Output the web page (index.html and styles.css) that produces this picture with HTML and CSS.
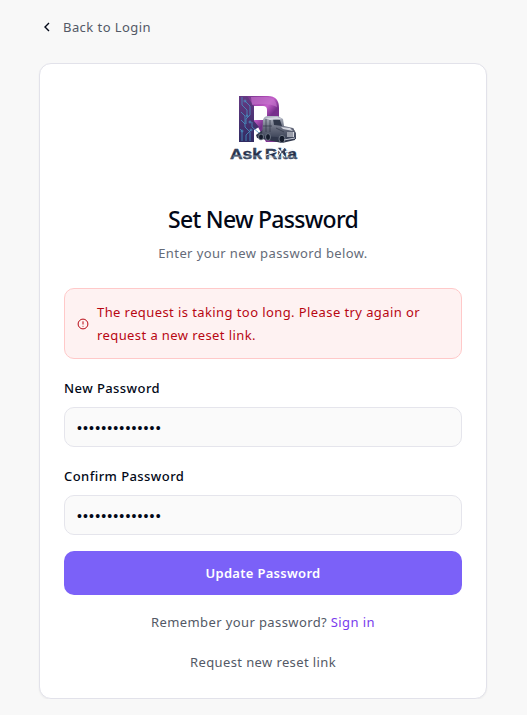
FILE: index.html
```html
<!DOCTYPE html>
<html lang="en">
<head>
<meta charset="utf-8">
<meta name="viewport" content="width=device-width, initial-scale=1">
<title>Set New Password</title>
<link rel="stylesheet" href="styles.css">
</head>
<body>
<main class="page">
  <a class="back"><svg class="back-icon" viewBox="0 0 16 16"><path d="M10 4 6 8l4 4"/></svg><span>Back to Login</span></a>
  <section class="card">
    <svg class="logo" viewBox="-1 0 80 80" role="img" aria-label="Ask Rita">
      <defs>
        <linearGradient id="purple" x1="0" y1="0" x2="1" y2="1">
          <stop offset="0" stop-color="#563177"/><stop offset=".3" stop-color="#a445ad"/><stop offset=".45" stop-color="#c45fca"/><stop offset=".6" stop-color="#762f8b"/><stop offset="1" stop-color="#8b3a9b"/>
        </linearGradient>
        <linearGradient id="board" x1="0" y1="0" x2="0" y2="1">
          <stop offset="0" stop-color="#663a84"/><stop offset="1" stop-color="#302b62"/>
        </linearGradient>
        <linearGradient id="chrome" x1="0" y1="0" x2="0" y2="1">
          <stop offset="0" stop-color="#b5bac7"/><stop offset=".5" stop-color="#656a7b"/><stop offset="1" stop-color="#30384d"/>
        </linearGradient>
        <linearGradient id="word" x1="0" y1="0" x2="0" y2="1">
          <stop offset="0" stop-color="#52627b"/><stop offset=".5" stop-color="#202842"/><stop offset="1" stop-color="#75869b"/>
        </linearGradient>
      </defs>
      <path fill="url(#purple)" fill-rule="evenodd" d="M15 8h29q11 0 11 12v9l-5 8 6 17H42l-8-15h-4v15H15zM30 18v14h9q4 0 4-4v-6q0-4-4-4z"/>
      <path fill="url(#board)" d="M15 8h8l7 10v15l5 6-5 3v12H15z"/>
      <path fill="#c574cd" opacity=".65" d="M27 9h16q9 0 10 10-9-5-25-2z"/>
      <g fill="none" stroke="#4794c3" stroke-width=".8">
        <path d="M18 9v8l5 5v6M21 13l5 5v9l-4 4v5M17 24l4 4v11l5 5v9M17 32l4 4M18 53V43l-2-2M22 53v-6l5-5M28 34v5l7 6"/>
        <circle cx="21" cy="13" r="1"/><circle cx="23" cy="28" r="1"/><circle cx="27" cy="42" r="1"/><circle cx="18" cy="43" r="1"/><circle cx="26" cy="34" r="1"/>
      </g>
      <path fill="#30374b" d="m32 47 8-6 29-1 2 4v8l-13 3-25-5z"/>
      <path fill="url(#chrome)" d="M39 32q1-4 5-4h10l5 3 1 7 9 2 3 5v6l-10 2-9-4-15-1z"/>
      <path fill="#303749" d="m49 31 7 1 2 6-8-1z"/>
      <path fill="#d5d7e0" d="m41 30 12-1 5 2-12 1zM57 39l9 1 3 3-10-2zM63 44h7v5h-7z"/>
      <path fill="none" stroke="#303748" stroke-width=".7" d="M42 31v13M46 32v12M39 38h9M64 44v5M66 44v5M68 44v5M52 40l8 4"/>
      <g fill="#151c2c" stroke="#8b93a2" stroke-width=".7"><ellipse cx="37" cy="49" rx="2.5" ry="3"/><ellipse cx="44" cy="49" rx="2.5" ry="3.4"/><ellipse cx="58" cy="51" rx="3" ry="3.7"/></g>
      <path stroke="#c1c6d3" stroke-width="1" d="m60 52 11-2"/>
      <g class="wordmark"><text x="6" y="71" textLength="32" lengthAdjust="spacingAndGlyphs">Ask</text><text x="41" y="71" textLength="32" lengthAdjust="spacingAndGlyphs">Rita</text></g>
      <path fill="none" stroke="#f1f5fa" stroke-width="1.3" d="m53 60 8 9M60 59l-7 11M42 67l12-4M61 64l8-2"/>
      <path fill="none" stroke="#303b54" stroke-width=".8" d="m55 60 7 9M61 60l-6 8"/>
      <path fill="none" stroke="#a6b8ca" stroke-width=".6" d="M9 68h28M43 69h28"/>
    </svg>
    <h1>Set New Password</h1>
    <p class="subtitle">Enter your new password below.</p>
    <div class="alert" role="alert">
      <svg class="alert-icon" viewBox="0 0 12 12"><circle cx="6" cy="6" r="4.9"/><path d="M6 3.3v3.2M6 7.9v.8"/></svg>
      <p>The request is taking too long. Please try again or<br>request a new reset link.</p>
    </div>
    <form>
      <label for="new">New Password</label>
      <input id="new" type="password" value="password123456">
      <label for="confirm">Confirm Password</label>
      <input id="confirm" type="password" value="password123456">
      <button type="button">Update Password</button>
    </form>
    <p class="signin">Remember your password? <a>Sign in</a></p>
    <p class="request">Request new reset link</p>
  </section>
</main>
</body>
</html>
```
FILE: styles.css
```css
* { box-sizing: border-box; }
body { margin: 0; background: #f8f8f8; color: #020817; font: 13px/20px "Noto Sans", sans-serif; letter-spacing: .39px; }
h1, p { margin: 0; }
.page { width: 448px; margin: 0 0 0 39px; padding-top: 17px; }
.back { display: flex; align-items: center; gap: 8px; height: 20px; color: #535966; letter-spacing: .44px; }
.back-icon { width: 16px; height: 16px; fill: none; stroke: #020817; stroke-width: 1.4; }
.card { display: flex; flex-direction: column; height: 636px; margin-top: 26px; padding: 24px; background: #fff; border: 1px solid #e2e2ea; border-radius: 12px; box-shadow: 0 1px 2px #0000000d; }
.logo { display: block; width: 80px; height: 80px; margin: 0 auto; }
.wordmark { fill: url(#word); stroke: #26334f; stroke-width: .4; font: bold 14px "Liberation Sans", sans-serif; letter-spacing: 0; }
h1 { margin-top: 35px; text-align: center; font-size: 23px; line-height: 32px; font-weight: 500; letter-spacing: -.72px; white-space: nowrap; }
.subtitle { margin-top: 8px; text-align: center; color: #656b78; }
.alert { display: flex; align-items: center; gap: 8px; height: 71px; margin-top: 25px; padding: 0 12px; border: 1px solid #ffc9c9; border-radius: 10px; background: #fef2f2; color: #b80712; line-height: 23px; white-space: nowrap; letter-spacing: .41px; }
.alert-icon { width: 12px; height: 12px; fill: none; stroke: currentColor; }
form { display: flex; flex-direction: column; }
label { height: 20px; margin-top: 19px; font-weight: 500; line-height: 20px; letter-spacing: .43px; }
input { width: 100%; height: 40px; margin: 9px 0 0; padding: 2px 12px 0; border: 1px solid #e5e5ec; border-radius: 10px; background: #fafafa; color: #020817; font: 14px "Liberation Sans", sans-serif; letter-spacing: 1.15px; }
button { height: 44px; margin-top: 16px; border: 0; border-radius: 10px; background: #7b61f8; color: #fff; font: 600 13px/20px "Noto Sans", sans-serif; letter-spacing: .3px; }
.signin, .request { text-align: center; color: #535966; }
.signin { margin-top: 17px; }
.signin a { color: #793bed; }
.request { margin-top: 20px; }
```
